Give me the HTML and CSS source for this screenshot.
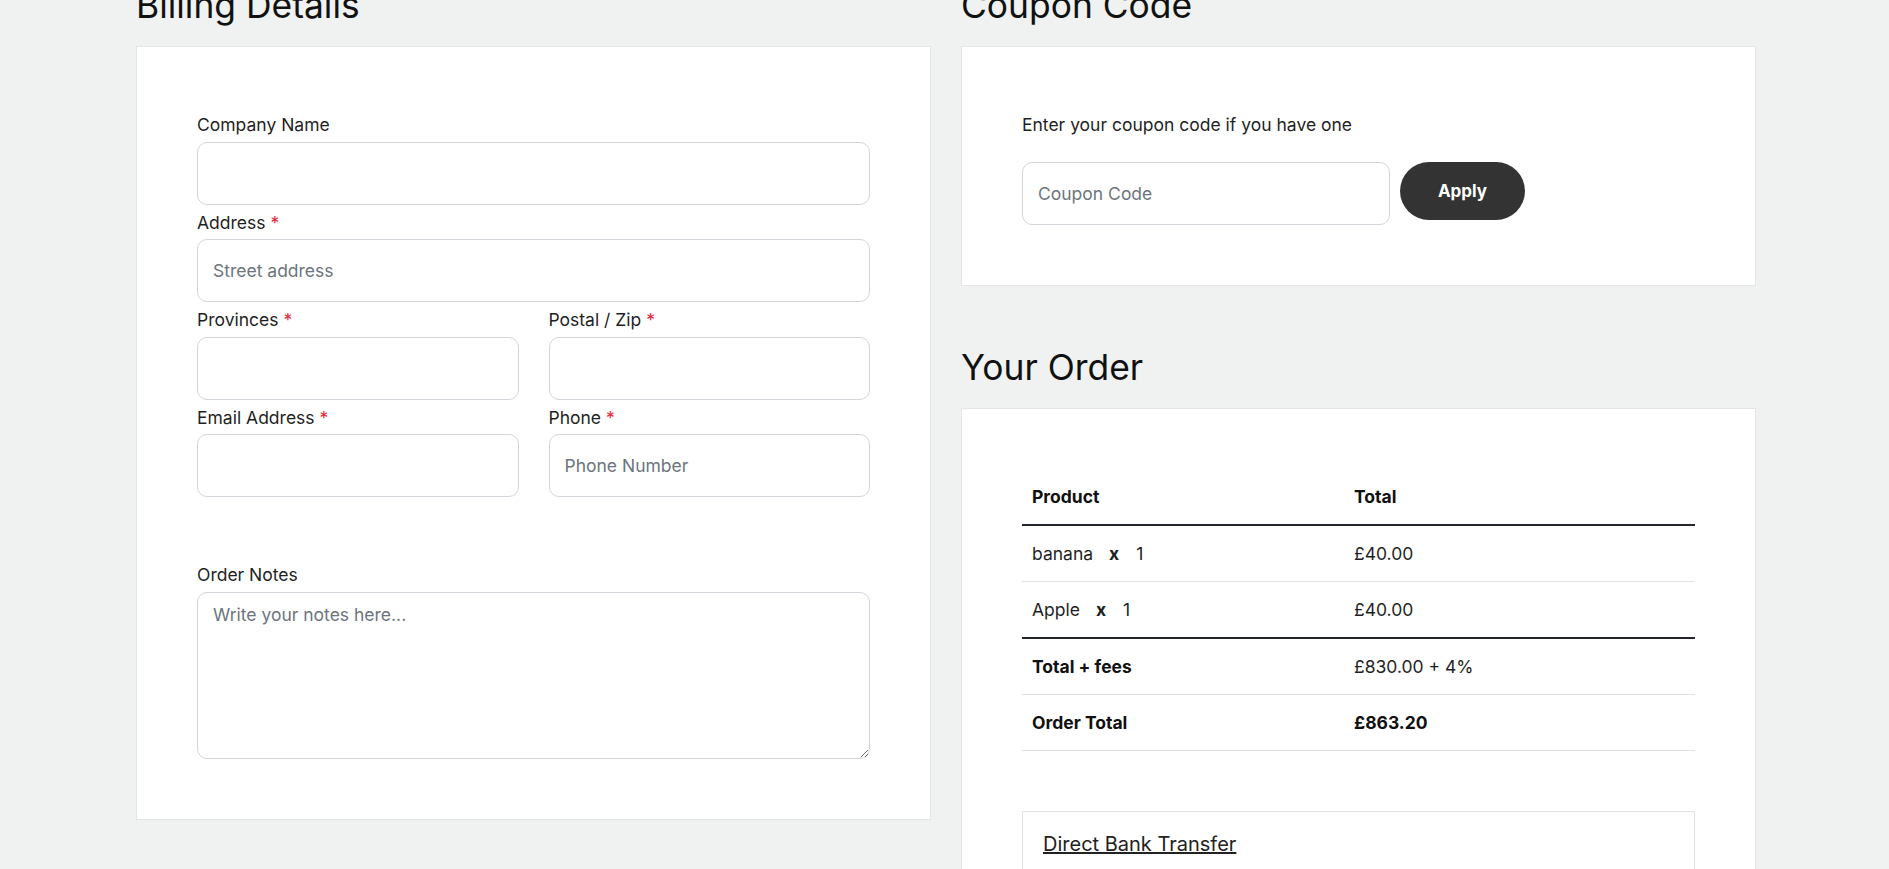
FILE: index.html
```html
<!DOCTYPE html>
<html lang="en">
<head>
<meta charset="utf-8">
<title>Checkout</title>
<link rel="stylesheet" href="styles.css">
</head>
<body>
<main class="checkout">
  <section class="col">
    <h2 class="section-title">Billing Details</h2>
    <div class="panel">
      <form class="billing-form">
        <div class="field">
          <label class="field-label">Company Name</label>
          <input class="text-input" type="text">
        </div>
        <div class="field">
          <label class="field-label">Address <span class="req">*</span></label>
          <input class="text-input" type="text" placeholder="Street address">
        </div>
        <div class="field-row">
          <div class="field">
            <label class="field-label">Provinces <span class="req">*</span></label>
            <input class="text-input" type="text">
          </div>
          <div class="field">
            <label class="field-label">Postal / Zip <span class="req">*</span></label>
            <input class="text-input" type="text">
          </div>
        </div>
        <div class="field-row">
          <div class="field">
            <label class="field-label">Email Address <span class="req">*</span></label>
            <input class="text-input" type="email">
          </div>
          <div class="field">
            <label class="field-label">Phone <span class="req">*</span></label>
            <input class="text-input" type="tel" placeholder="Phone Number">
          </div>
        </div>
        <div class="field field-notes">
          <label class="field-label">Order Notes</label>
          <textarea class="text-area" placeholder="Write your notes here..."></textarea>
        </div>
      </form>
    </div>
  </section>

  <section class="col">
    <h2 class="section-title">Coupon Code</h2>
    <div class="panel">
      <p class="coupon-text">Enter your coupon code if you have one</p>
      <div class="coupon-row">
        <input class="text-input coupon-input" type="text" placeholder="Coupon Code">
        <button class="apply-btn" type="button">Apply</button>
      </div>
    </div>

    <h2 class="section-title order-title">Your Order</h2>
    <div class="panel order-panel">
      <table class="order-table">
        <thead>
          <tr class="row-strong"><th class="cell-name">Product</th><th>Total</th></tr>
        </thead>
        <tbody>
          <tr><td class="cell-name">banana<span class="qty-x">x</span>1</td><td>£40.00</td></tr>
          <tr class="row-strong"><td class="cell-name">Apple<span class="qty-x">x</span>1</td><td>£40.00</td></tr>
          <tr><th class="cell-name">Total + fees</th><td>£830.00 + 4%</td></tr>
          <tr><th class="cell-name">Order Total</th><td class="cell-bold">£863.20</td></tr>
        </tbody>
      </table>
      <div class="payment-box">
        <a class="payment-link" href="#">Direct Bank Transfer</a>
        <p class="payment-desc">Make your payment directly into our bank account.</p>
      </div>
    </div>
  </section>
</main>
</body>
</html>
```

FILE: styles.css
```css
html, body {
  margin: 0;
  padding: 0;
  overflow: hidden;
}
body {
  background: #f0f2f1;
  font-family: Inter, "Noto Sans", "Liberation Sans", sans-serif;
  font-size: 17.5px;
  color: #1f1f1f;
}
.checkout {
  width: 1620px;
  margin: -15px 0 0 calc(50% - 808.5px);
  display: grid;
  grid-template-columns: 1fr 1fr;
  column-gap: 30px;
  align-items: start;
}
.section-title {
  margin: 0 0 19px;
  font-size: 35.4px;
  line-height: 42px;
  font-weight: 400;
  color: #111;
}
.order-title {
  margin-top: 61px;
}
.panel {
  background: #fff;
  border: 1px solid #e3e5e7;
  padding: 60px;
}
.billing-form {
  display: flex;
  flex-direction: column;
}
.field {
  display: flex;
  flex-direction: column;
  padding-top: 4px;
}
.field-row {
  display: grid;
  grid-template-columns: 1fr 1fr;
  column-gap: 30px;
}
.field-label {
  line-height: 27px;
  margin-bottom: 3.5px;
  color: #1f1f1f;
}
.req {
  color: #e5253a;
}
.text-input {
  box-sizing: border-box;
  height: 63px;
  width: 100%;
  border: 1px solid #d2d5da;
  border-radius: 10px;
  padding: 0 15px;
  font-family: inherit;
  font-size: 17.5px;
  color: #1f1f1f;
  background: #fff;
  outline: none;
}
.text-input::placeholder,
.text-area::placeholder {
  color: #6c757d;
}
.field-notes {
  margin-top: 60px;
}
.text-area {
  box-sizing: border-box;
  height: 167px;
  width: 100%;
  border: 1px solid #d2d5da;
  border-radius: 10px;
  padding: 11px 15px;
  font-family: inherit;
  font-size: 17.5px;
  line-height: 22px;
  resize: vertical;
  display: block;
  outline: none;
}
.coupon-text {
  margin: 0 0 23.5px;
  padding-top: 4px;
  line-height: 27px;
}
.coupon-row {
  display: flex;
  align-items: flex-start;
  gap: 10px;
}
.coupon-input {
  width: 368px;
}
.apply-btn {
  height: 58px;
  width: 125px;
  border: none;
  border-radius: 29px;
  background: #333;
  color: #fff;
  font-family: inherit;
  font-size: 17px;
  font-weight: 700;
  cursor: pointer;
}
.order-table {
  width: 100%;
  border-collapse: collapse;
}
.order-table th,
.order-table td {
  height: 55px;
  padding: 0 10px;
  text-align: left;
  vertical-align: middle;
  line-height: 27px;
  border-bottom: 1px solid #e2e2e4;
}
.order-table th {
  font-weight: 700;
  color: #111;
}
.order-table .row-strong th,
.order-table .row-strong td {
  border-bottom: 2px solid #222529;
}
.cell-name {
  width: 302px;
}
.cell-bold {
  font-weight: 700;
  color: #111;
}
.qty-x {
  font-weight: 700;
  margin: 0 17px 0 16px;
}
.payment-box {
  margin-top: 60px;
  border: 1px solid #e2e2e4;
  padding: 18px 20px 40px;
}
.payment-link {
  color: #222;
  text-decoration: underline;
  font-size: 20px;
  line-height: 28px;
}
.payment-desc {
  margin: 20px 0 0;
  line-height: 27px;
  color: #555;
}
```
